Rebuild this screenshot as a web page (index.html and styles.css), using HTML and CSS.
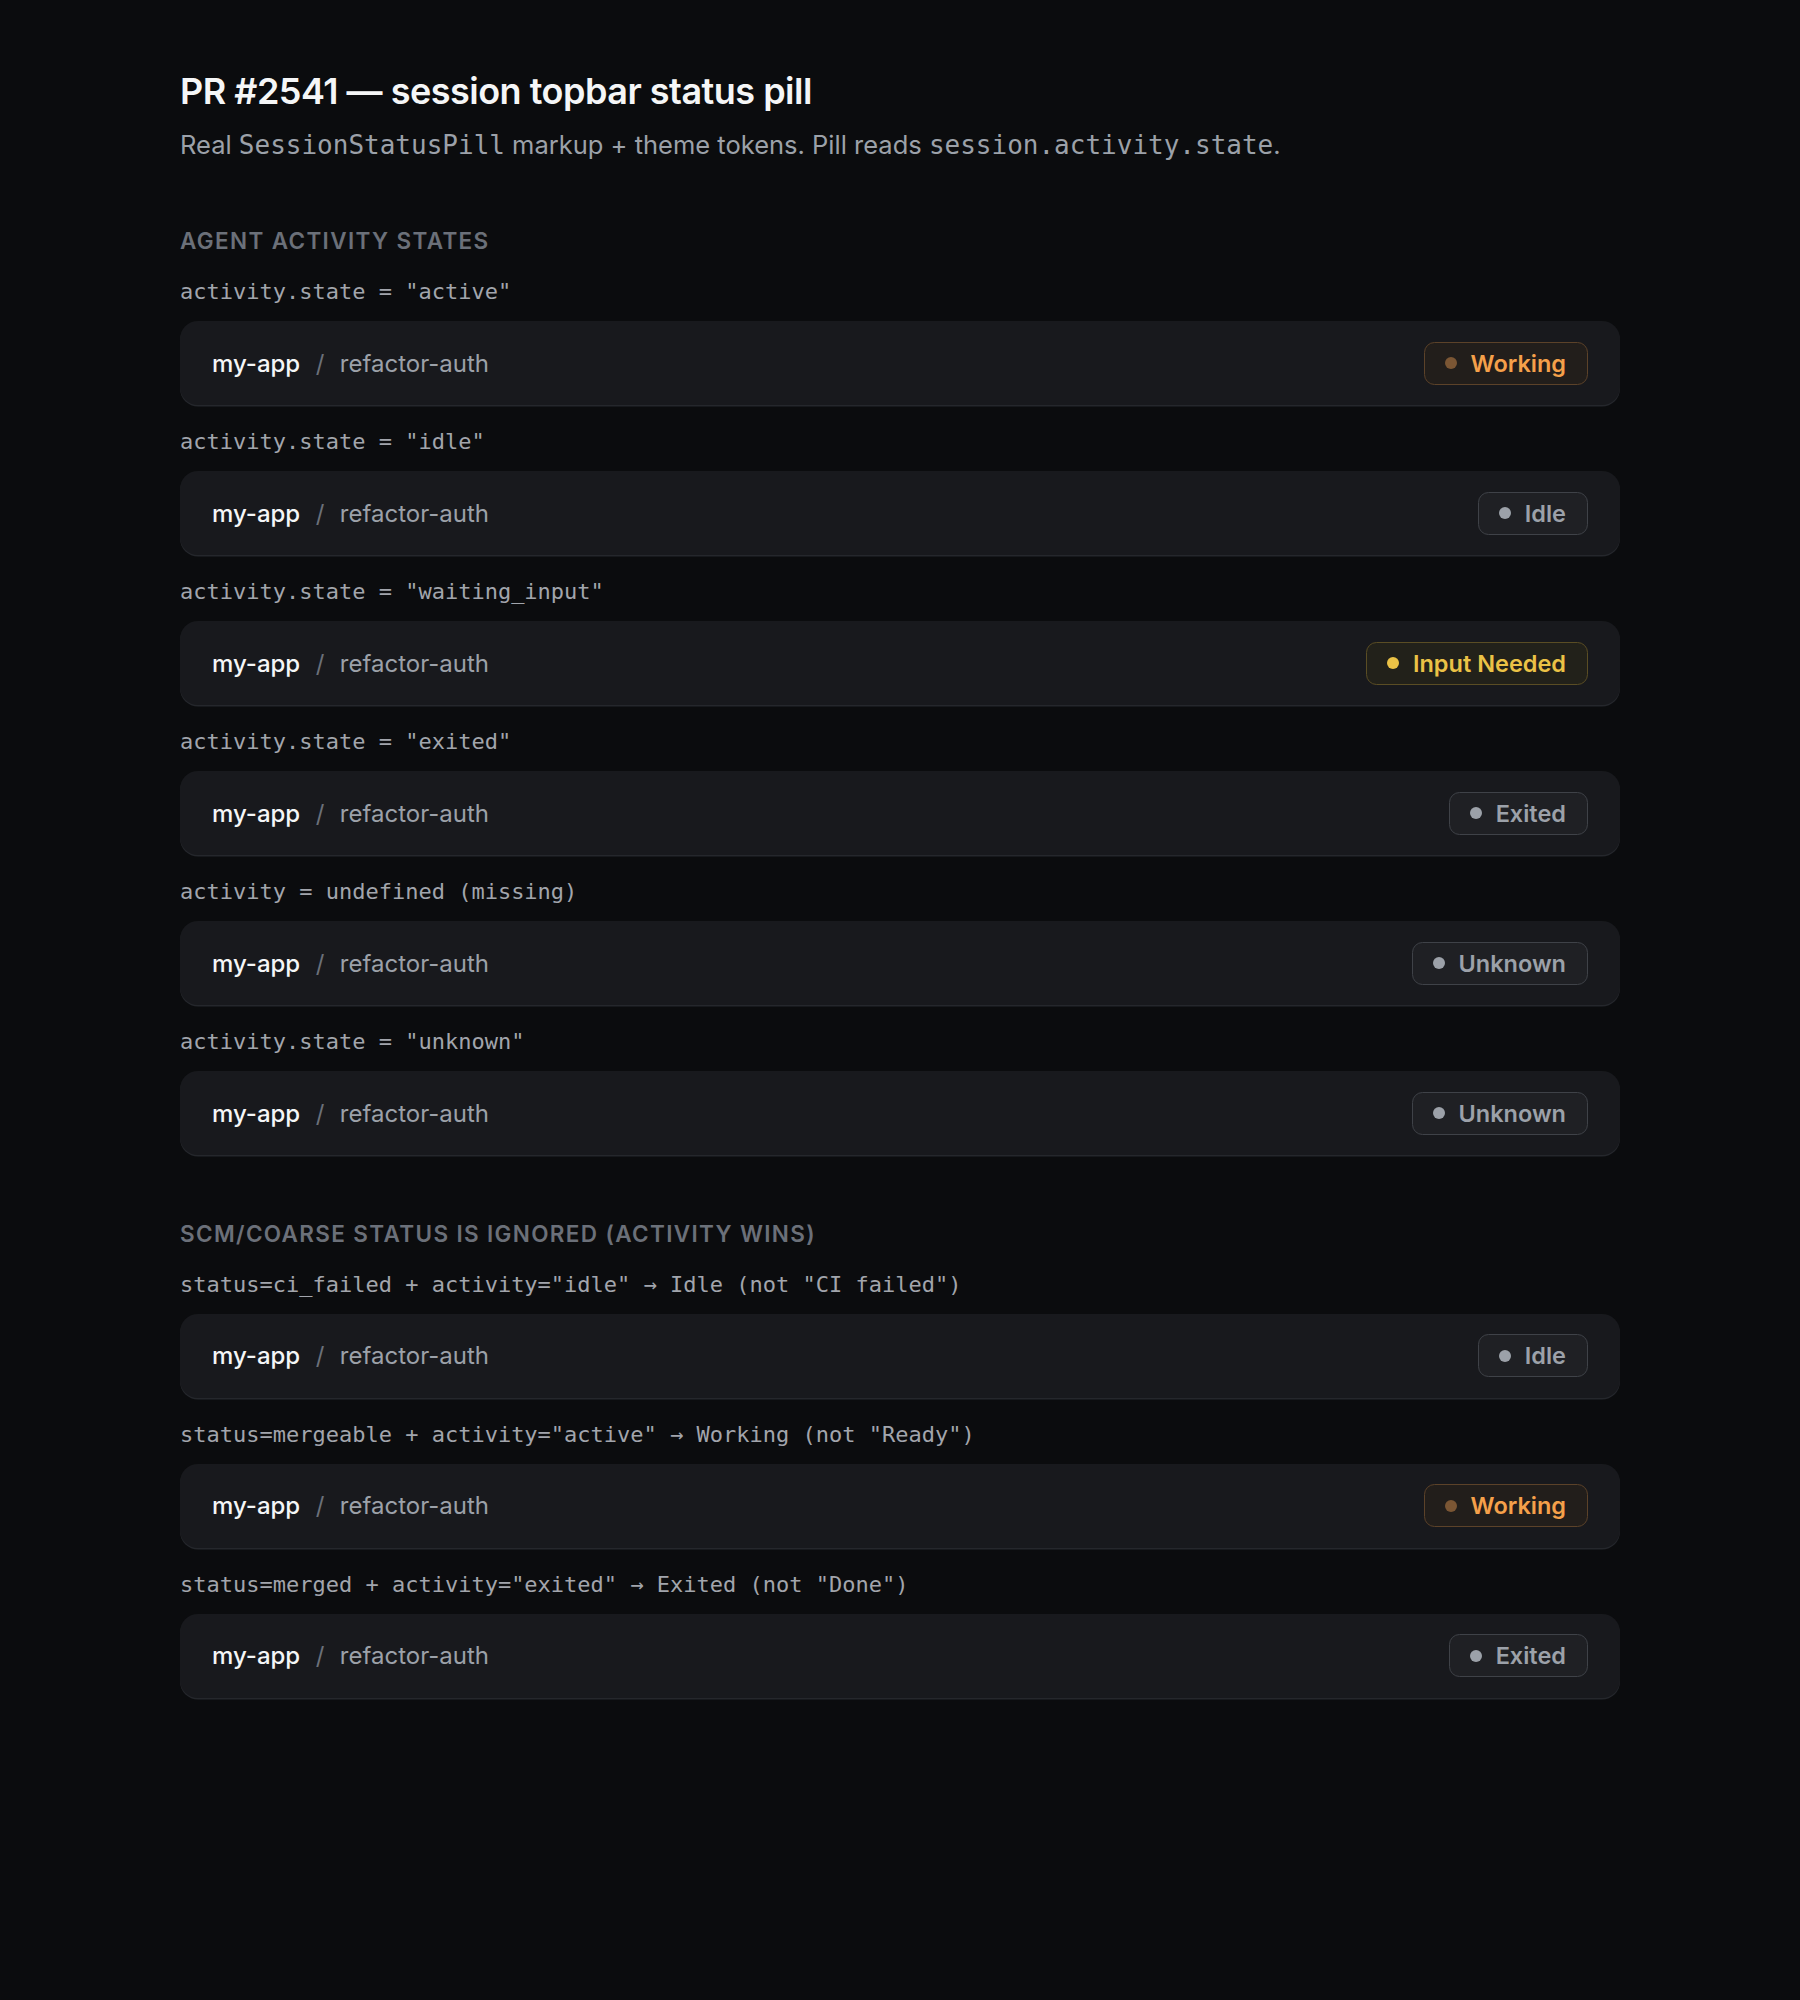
FILE: index.html
```
<!DOCTYPE html>
<html lang="en">
    <head>
        <meta charset="utf-8">
        <meta name="viewport" content="width=device-width, initial-scale=1.0">
        <title>PR #2541 — session topbar status pill</title>
        <link rel="stylesheet" href="styles.css">
    </head>
    <body>
        <main class="page">
            <header class="intro">
                <h1>PR #2541 — session topbar status pill</h1>
                <p>Real <code>SessionStatusPill</code> markup + theme tokens. Pill reads <code>session.activity.state</code>.</p>
            </header>

            <section class="group">
                <h2>Agent activity states</h2>
                <div class="cases">
                    <div class="case">
                        <p class="case-label">activity.state = "active"</p>
                        <div class="topbar">
                            <div class="crumbs"><span class="project">my-app</span><span class="sep">/</span><span class="branch">refactor-auth</span></div>
                            <span class="pill pill-working"><span class="dot"></span>Working</span>
                        </div>
                    </div>
                    <div class="case">
                        <p class="case-label">activity.state = "idle"</p>
                        <div class="topbar">
                            <div class="crumbs"><span class="project">my-app</span><span class="sep">/</span><span class="branch">refactor-auth</span></div>
                            <span class="pill pill-muted"><span class="dot"></span>Idle</span>
                        </div>
                    </div>
                    <div class="case">
                        <p class="case-label">activity.state = "waiting_input"</p>
                        <div class="topbar">
                            <div class="crumbs"><span class="project">my-app</span><span class="sep">/</span><span class="branch">refactor-auth</span></div>
                            <span class="pill pill-input"><span class="dot"></span>Input Needed</span>
                        </div>
                    </div>
                    <div class="case">
                        <p class="case-label">activity.state = "exited"</p>
                        <div class="topbar">
                            <div class="crumbs"><span class="project">my-app</span><span class="sep">/</span><span class="branch">refactor-auth</span></div>
                            <span class="pill pill-muted"><span class="dot"></span>Exited</span>
                        </div>
                    </div>
                    <div class="case">
                        <p class="case-label">activity = undefined (missing)</p>
                        <div class="topbar">
                            <div class="crumbs"><span class="project">my-app</span><span class="sep">/</span><span class="branch">refactor-auth</span></div>
                            <span class="pill pill-muted"><span class="dot"></span>Unknown</span>
                        </div>
                    </div>
                    <div class="case">
                        <p class="case-label">activity.state = "unknown"</p>
                        <div class="topbar">
                            <div class="crumbs"><span class="project">my-app</span><span class="sep">/</span><span class="branch">refactor-auth</span></div>
                            <span class="pill pill-muted"><span class="dot"></span>Unknown</span>
                        </div>
                    </div>
                </div>
            </section>

            <section class="group">
                <h2>SCM/coarse status is ignored (activity wins)</h2>
                <div class="cases">
                    <div class="case">
                        <p class="case-label">status=ci_failed + activity="idle" → Idle (not "CI failed")</p>
                        <div class="topbar">
                            <div class="crumbs"><span class="project">my-app</span><span class="sep">/</span><span class="branch">refactor-auth</span></div>
                            <span class="pill pill-muted"><span class="dot"></span>Idle</span>
                        </div>
                    </div>
                    <div class="case">
                        <p class="case-label">status=mergeable + activity="active" → Working (not "Ready")</p>
                        <div class="topbar">
                            <div class="crumbs"><span class="project">my-app</span><span class="sep">/</span><span class="branch">refactor-auth</span></div>
                            <span class="pill pill-working"><span class="dot"></span>Working</span>
                        </div>
                    </div>
                    <div class="case">
                        <p class="case-label">status=merged + activity="exited" → Exited (not "Done")</p>
                        <div class="topbar">
                            <div class="crumbs"><span class="project">my-app</span><span class="sep">/</span><span class="branch">refactor-auth</span></div>
                            <span class="pill pill-muted"><span class="dot"></span>Exited</span>
                        </div>
                    </div>
                </div>
            </section>
        </main>
    </body>
</html>
```

FILE: styles.css
```
* {
    box-sizing: border-box;
}
html, body {
    margin: 0;
    padding: 0;
    background: #0b0c0e;
}
body {
    font-family: Inter, "Liberation Sans", sans-serif;
    color: #f3f4f6;
    min-height: 2000px;
}
h1, h2, p {
    margin: 0;
}
code,
.case-label {
    font-family: "DejaVu Sans Mono", "Liberation Mono", monospace;
}

.page {
    max-width: 1440px;
    margin: 0 auto;
    padding: 68.5px 0;
}

/* header */
.intro h1 {
    font-size: 36px;
    line-height: 45px;
    font-weight: 600;
    letter-spacing: -0.014em;
    color: #f5f6f7;
}
.intro p {
    margin-top: 13px;
    font-size: 25.5px;
    line-height: 36px;
    color: #9ca1a9;
}
.intro code {
    font-size: 26px;
}

/* groups of cases */
.group {
    margin-top: 63.5px;
}
.group + .group {
    margin-top: 63.5px;
}
.group h2 {
    font-size: 22.5px;
    line-height: 30px;
    font-weight: 600;
    text-transform: uppercase;
    letter-spacing: 0.06em;
    color: #6b7079;
    margin-bottom: 21px;
}
.cases {
    display: flex;
    flex-direction: column;
    gap: 22px;
}
.case-label {
    font-size: 22px;
    line-height: 30px;
    color: #a2a5ac;
    margin-bottom: 14px;
}

/* the topbar itself */
.topbar {
    display: flex;
    align-items: center;
    justify-content: space-between;
    height: 84px;
    padding: 0 32px;
    background: #18191d;
    border-radius: 18px;
    box-shadow: 0 1.5px 0 #25272c;
}
.crumbs {
    display: flex;
    align-items: baseline;
    font-size: 24px;
}
.crumbs .project {
    font-weight: 500;
    color: #f5f6f7;
}
.crumbs .sep {
    margin: 0 15.5px;
    color: #6b7079;
}
.crumbs .branch {
    color: #9ca1a9;
}

/* SessionStatusPill */
.pill {
    display: inline-flex;
    align-items: center;
    gap: 14px;
    height: 43px;
    padding: 0 21px 0 20px;
    border: 1.5px solid;
    border-radius: 10.5px;
    font-size: 23.5px;
    font-weight: 600;
}
.pill .dot {
    width: 12px;
    height: 12px;
    border-radius: 50%;
    background: currentColor;
}
.pill-working {
    color: #f5a04a;
    background: #221e1b;
    border-color: #5c4229;
}
.pill-working .dot {
    background: #7b5634;
}
.pill-input {
    color: #ebc246;
    background: #22211a;
    border-color: #5a4d24;
}
.pill-muted {
    color: #9ca1a9;
    background: #1f2024;
    border-color: #3f4248;
}
```
